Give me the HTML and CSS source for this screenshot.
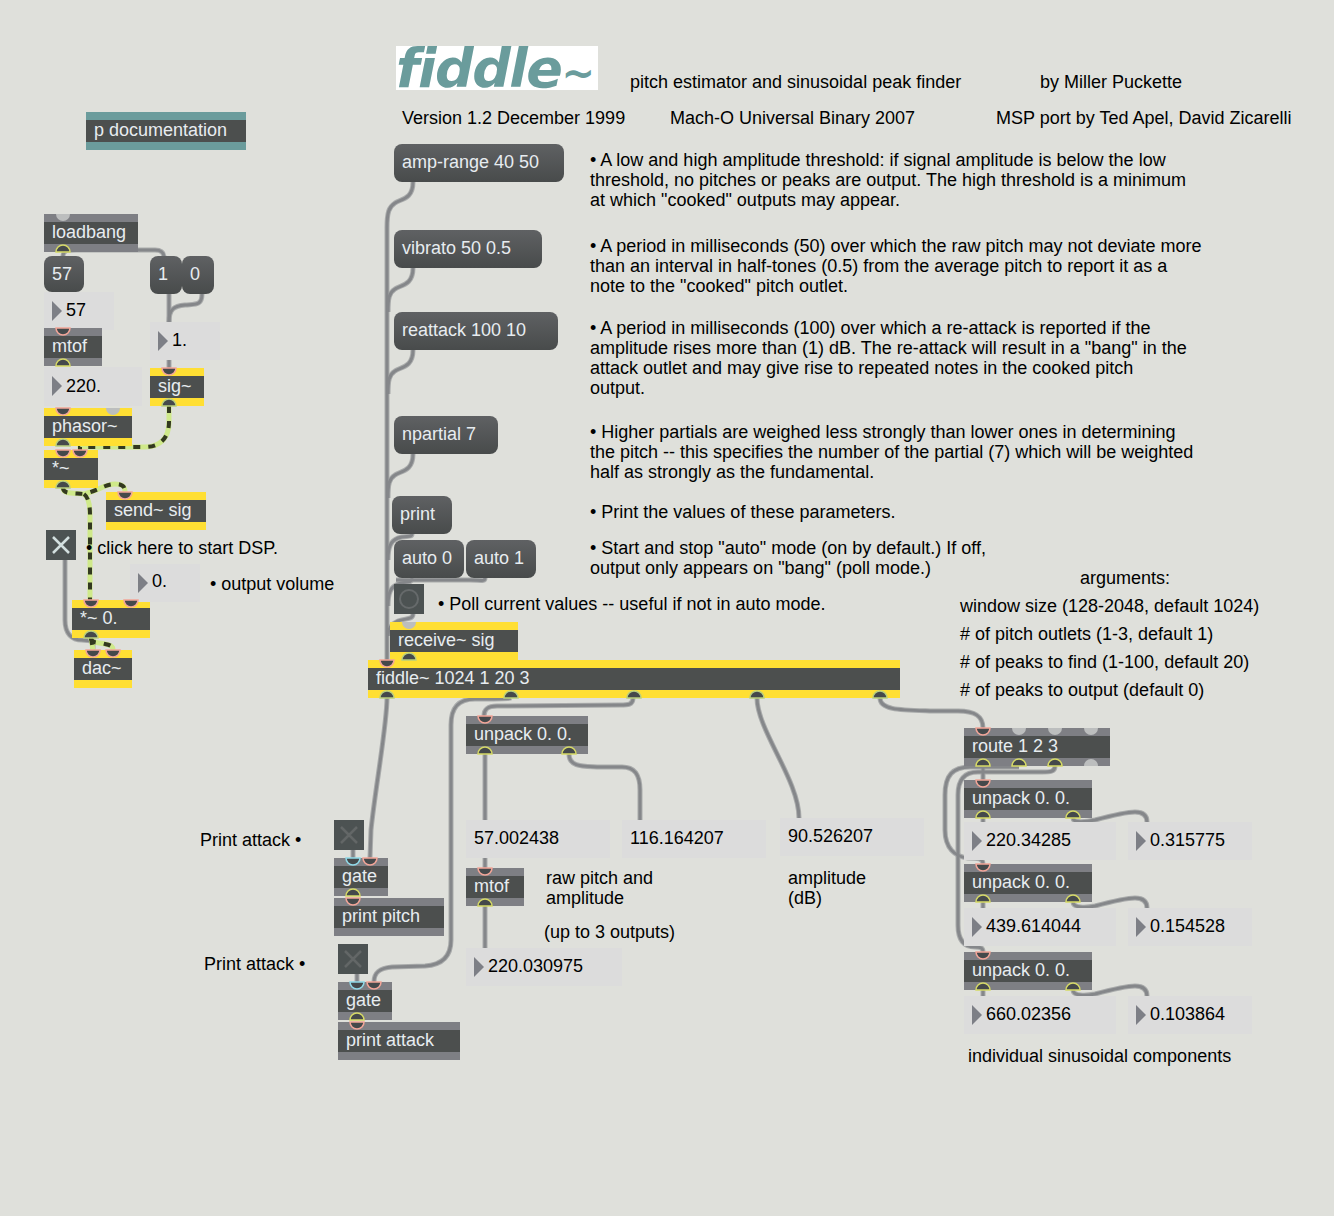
FILE: index.html

```html
<!DOCTYPE html>
<html lang="en">
<head>
  <meta charset="UTF-8">
  <title>fiddle~ help patcher</title>
  <link rel="stylesheet" href="styles.css">
</head>
<body>

<div class="patch">

  <!-- patch cords sit under the boxes -->
  <svg class="layer" width="1334" height="1216">
    <defs>
      <g id="cords">
        <path d="M63 256C63 250 68 250 76 250L155 250C161 250 164 252 164 258"/>
        <path d="M169 294L169 322"/>
        <path d="M202 294C202 306 195 304 185 305C174 306 169 309 169 322"/>
        <path d="M169 360L169 368"/>
        <path d="M65 560L65 620C65 634 72 640 82 640L93 641L93 650"/>
        <path d="M413 182C413 200 400 199 395 203C389 207 387 212 387 228L387 660"/>
        <path d="M413 268C413 286 400 285 395 289C389 293 388 298 388 312"/>
        <path d="M413 350C413 368 400 367 395 371C389 375 388 380 388 394"/>
        <path d="M413 454C413 472 400 471 395 475C389 479 388 484 388 498"/>
        <path d="M412 534C412 538 405 535 398 538C391 541 388 546 388 560"/>
        <path d="M412 578C412 584 405 581 398 584C391 587 388 592 388 606"/>
        <path d="M485 578C485 582 480 580 470 580L396 580"/>
        <path d="M413 614C413 620 405 618 398 621C391 624 388 628 388 636"/>
        <path d="M387 698C387 725 375 790 371 830L370 858"/>
        <path d="M511 698C508 699 490 699 475 699C458 699 451 708 451 725L451 940C451 958 440 965 425 966L392 967C380 968 374 972 374 982"/>
        <path d="M633 698C633 705 628 705 620 705L497 706C488 706 484 709 484 716"/>
        <path d="M757 698C757 730 799 780 799 818"/>
        <path d="M880 698C880 710 900 710 930 711L958 711C975 711 983 716 983 728"/>
        <path d="M485 754L485 820"/>
        <path d="M569 754C569 768 585 766 600 767L622 767C635 767 640 775 640 790L640 820"/>
        <path d="M485 858L485 868"/>
        <path d="M485 906L485 948"/>
        <path d="M353 850L353 858"/>
        <path d="M357 974L357 982"/>
        <path d="M983 766L983 780"/>
        <path d="M1019 767L970 767C953 767 945 775 945 795L945 830C945 848 955 857 968 858C978 858 983 858 983 864"/>
        <path d="M1055 766C1055 772 1050 772 1042 772L978 772C964 772 958 780 958 795L958 925C958 940 964 947 975 947C981 947 983 948 983 952"/>
        <path d="M983 818L983 822"/>
        <path d="M983 902L983 908"/>
        <path d="M983 990L983 996"/>
        <path d="M1073 818C1073 823 1085 822 1095 820C1110 816 1125 812 1135 812C1143 812 1147 815 1147 822"/>
        <path d="M1073 902C1073 908 1085 908 1095 906C1110 902 1125 898 1135 898C1143 898 1147 901 1147 908"/>
        <path d="M1073 990C1073 996 1085 996 1095 994C1110 990 1125 986 1135 986C1143 986 1147 989 1147 996"/>
      </g>
      <g id="signals">
        <path d="M169 406L169 422C169 438 160 447 145 447L80 447L80 450"/>
        <path d="M63 488C63 494 72 493 84 494C98 491 105 484 115 484C122 484 125 486 125 492"/>
        <path d="M84 494C88 497 90 504 90 515L90 600"/>
        <path d="M91 638L93 650"/>
        <path d="M91 638C91 644 100 642 105 644C110 645 113 646 113 650"/>
      </g>
      <path id="in" d="M-7 0a7 7 0 0 0 14 0z"/>
      <path id="out" d="M-7 0a7 7 0 0 1 14 0z"/>
    </defs>
    <use href="#cords" class="cord-edge"/>
    <use href="#cords" class="cord-core"/>
    <use href="#signals" class="signal-edge"/>
    <use href="#signals" class="signal-core"/>
  </svg>

  <div class="logo">fiddle<span class="logo-tilde">~</span></div>

  <!-- top notes -->
  <p class="note n-title">pitch estimator and sinusoidal peak finder</p>
  <p class="note n-author">by Miller Puckette</p>
  <p class="note n-version">Version 1.2 December 1999</p>
  <p class="note n-macho">Mach-O Universal Binary 2007</p>
  <p class="note n-port">MSP port by Ted Apel, David Zicarelli</p>

  <!-- left hand column -->
  <div class="obj doc o-doc">p documentation</div>
  <div class="obj o-loadbang">loadbang</div>
  <div class="msg o-m57">57</div>
  <div class="msg o-m1">1</div>
  <div class="msg o-m0">0</div>
  <div class="num o-n57">57</div>
  <div class="num o-n1">1.</div>
  <div class="obj o-mtof">mtof</div>
  <div class="num o-n220">220.</div>
  <div class="obj sig o-sig">sig~</div>
  <div class="obj sig o-phasor">phasor~</div>
  <div class="obj sig o-times">*~</div>
  <div class="obj sig o-send">send~ sig</div>
  <div class="toggle o-dsp"><svg width="30" height="30"><path d="M7 7L23 23M23 7L7 23"/></svg></div>
  <p class="note n-click">• click here to start DSP.</p>
  <div class="obj sig o-times0">*~ 0.</div>
  <div class="num num-up o-n0">0.</div>
  <p class="note n-volume">• output volume</p>
  <div class="obj sig o-dac">dac~</div>

  <!-- messages -->
  <div class="msg o-amp">amp-range 40 50</div>
  <div class="msg o-vibrato">vibrato 50 0.5</div>
  <div class="msg o-reattack">reattack 100 10</div>
  <div class="msg o-npartial">npartial 7</div>
  <div class="msg o-print">print</div>
  <div class="msg o-auto0">auto 0</div>
  <div class="msg o-auto1">auto 1</div>
  <div class="bang o-bang"></div>

  <p class="note n-amp">• A low and high amplitude threshold: if signal amplitude is below the low<br>threshold, no pitches or peaks are output. The high threshold is a minimum<br>at which "cooked" outputs may appear.</p>
  <p class="note n-vibrato">• A period in milliseconds (50) over which the raw pitch may not deviate more<br>than an interval in half-tones (0.5) from the average pitch to report it as a<br>note to the "cooked" pitch outlet.</p>
  <p class="note n-reattack">• A period in milliseconds (100) over which a re-attack is reported if the<br>amplitude rises more than (1) dB. The re-attack will result in a "bang" in the<br>attack outlet and may give rise to repeated notes in the cooked pitch<br>output.</p>
  <p class="note n-npartial">• Higher partials are weighed less strongly than lower ones in determining<br>the pitch -- this specifies the number of the partial (7) which will be weighted<br>half as strongly as the fundamental.</p>
  <p class="note n-print">• Print the values of these parameters.</p>
  <p class="note n-auto">• Start and stop "auto" mode (on by default.) If off,<br>output only appears on "bang" (poll mode.)</p>
  <p class="note n-poll">• Poll current values -- useful if not in auto mode.</p>

  <p class="note n-args">arguments:</p>
  <p class="note n-arg1"> window size (128-2048, default 1024)</p>
  <p class="note n-arg2"># of pitch outlets (1-3, default 1)</p>
  <p class="note n-arg3"># of peaks to find (1-100, default 20)</p>
  <p class="note n-arg4"># of peaks to output (default 0)</p>

  <div class="obj sig o-receive">receive~ sig</div>
  <div class="obj sig o-fiddle">fiddle~ 1024 1 20 3</div>

  <!-- print branch -->
  <p class="note n-attack1">Print attack •</p>
  <div class="toggle dim o-t1"><svg width="30" height="30"><path d="M7 7L23 23M23 7L7 23"/></svg></div>
  <div class="obj o-gate1">gate</div>
  <div class="obj o-pitch">print pitch</div>
  <p class="note n-attack2">Print attack •</p>
  <div class="toggle dim o-t2"><svg width="30" height="30"><path d="M7 7L23 23M23 7L7 23"/></svg></div>
  <div class="obj o-gate2">gate</div>
  <div class="obj o-attack">print attack</div>

  <!-- raw pitch and amplitude -->
  <div class="obj o-unpack">unpack 0. 0.</div>
  <div class="num bare o-raw">57.002438</div>
  <div class="num bare o-rawamp">116.164207</div>
  <div class="num bare o-dbamp">90.526207</div>
  <div class="obj o-mtof2">mtof</div>
  <div class="num o-freq">220.030975</div>
  <p class="note n-raw">raw pitch and<br>amplitude</p>
  <p class="note n-upto">(up to 3 outputs)</p>
  <p class="note n-db">amplitude<br>(dB)</p>

  <!-- sinusoidal components -->
  <div class="obj o-route">route 1 2 3</div>
  <div class="obj o-up1">unpack 0. 0.</div>
  <div class="num o-f1">220.34285</div>
  <div class="num o-a1">0.315775</div>
  <div class="obj o-up2">unpack 0. 0.</div>
  <div class="num o-f2">439.614044</div>
  <div class="num o-a2">0.154528</div>
  <div class="obj o-up3">unpack 0. 0.</div>
  <div class="num o-f3">660.02356</div>
  <div class="num o-a3">0.103864</div>
  <p class="note n-indiv">individual sinusoidal components</p>

  <!-- inlets and outlets sit on top of everything -->
  <svg class="layer" width="1334" height="1216">
    <g class="port-in">
      <use href="#in" x="63" y="328"/><use href="#in" x="169" y="368"/><use href="#in" x="63" y="408"/>
      <use href="#in" x="63" y="450"/><use href="#in" x="80" y="450"/><use href="#in" x="125" y="492"/>
      <use href="#in" x="91" y="600"/><use href="#in" x="131" y="600"/><use href="#in" x="93" y="650"/>
      <use href="#in" x="113" y="650"/><use href="#in" x="387" y="660"/><use href="#in" x="485" y="716"/>
      <use href="#in" x="983" y="728"/><use href="#in" x="983" y="780"/><use href="#in" x="983" y="864"/>
      <use href="#in" x="983" y="952"/><use href="#in" x="370" y="858"/><use href="#in" x="374" y="982"/>
      <use href="#in" x="353" y="898"/><use href="#in" x="357" y="1022"/><use href="#in" x="485" y="868"/>
    </g>
    <g class="port-cold">
      <use href="#in" x="353" y="858"/><use href="#in" x="357" y="982"/>
    </g>
    <g class="port-idle">
      <use href="#in" x="63" y="214"/><use href="#in" x="113" y="408"/><use href="#in" x="409" y="622"/>
      <use href="#in" x="1019" y="728"/><use href="#in" x="1055" y="728"/><use href="#in" x="1091" y="728"/>
      <use href="#out" x="1091" y="766"/>
    </g>
    <g class="port-out">
      <use href="#out" x="63" y="252"/><use href="#out" x="63" y="366"/><use href="#out" x="485" y="906"/>
      <use href="#out" x="353" y="896"/><use href="#out" x="357" y="1020"/>
      <use href="#out" x="983" y="766"/><use href="#out" x="1019" y="766"/><use href="#out" x="1055" y="766"/>
      <use href="#out" x="983" y="818"/><use href="#out" x="1073" y="818"/><use href="#out" x="983" y="902"/>
      <use href="#out" x="1073" y="902"/><use href="#out" x="983" y="990"/><use href="#out" x="1073" y="990"/>
      <use href="#out" x="485" y="754"/><use href="#out" x="569" y="754"/>
    </g>
    <g class="port-sig">
      <use href="#out" x="169" y="406"/><use href="#out" x="63" y="446"/><use href="#out" x="63" y="488"/>
      <use href="#out" x="91" y="638"/><use href="#out" x="409" y="660"/><use href="#out" x="387" y="698"/>
      <use href="#out" x="511" y="698"/><use href="#out" x="634" y="698"/><use href="#out" x="757" y="698"/>
      <use href="#out" x="880" y="698"/>
    </g>
  </svg>

</div>

</body>
</html>
```

FILE: styles.css

```css
body {
  margin: 0;
  background-color: #dfe0db;
  font-family: "Liberation Sans", Arial, sans-serif;
  font-size: 18px;
}
.patch {
  position: relative;
  width: 1334px;
  height: 1216px;
  overflow: hidden;
}
.layer {
  position: absolute;
  left: 0;
  top: 0;
  pointer-events: none;
}

/* cords */
.cord-edge, .cord-core, .signal-edge, .signal-core {
  fill: none;
}
.cord-edge {
  stroke: #a9abab;
  stroke-width: 5;
}
.cord-core {
  stroke: #85878a;
  stroke-width: 3;
}
.signal-edge {
  stroke: #cfe98a;
  stroke-width: 5;
}
.signal-core {
  stroke: #33391f;
  stroke-width: 4;
  stroke-dasharray: 7 8;
}

/* ports */
.port-in, .port-cold, .port-out, .port-sig {
  fill: #45494b;
  stroke-width: 1.5;
}
.port-in { stroke: #f2a598; }
.port-cold { stroke: #8fd9e8; }
.port-out { stroke: #d6da66; }
.port-sig { stroke: #b9cf7e; }
.port-idle { fill: #bcbebe; }

/* boxes */
.obj, .msg, .num, .toggle, .bang {
  position: absolute;
  box-sizing: border-box;
  height: 38px;
}
.obj, .msg, .num {
  line-height: 36px;
  padding-left: 8px;
  white-space: nowrap;
}
.obj, .msg {
  color: #e7ecf0;
}
.obj {
  background-color: #4c4f4e;
  border-top: 8px solid #7e7f84;
  border-bottom: 8px solid #7e7f84;
  line-height: 20px;
}
.sig {
  border-color: #ffdf33;
}
.doc {
  border-color: #6b9c9c;
}
.msg {
  border-radius: 8px;
  background: linear-gradient(#5f6163, #484b4b);
}
.num {
  background-color: #dcdcdc;
  color: #000;
  padding-left: 22px;
}
.num::before {
  content: "";
  position: absolute;
  left: 8px;
  top: 9px;
  border-left: 10px solid #7d7f86;
  border-top: 10px solid transparent;
  border-bottom: 10px solid transparent;
}
.bare {
  padding-left: 8px;
}
.bare::before {
  display: none;
}
.num-up {
  line-height: 34px;
}
.toggle, .bang {
  width: 30px;
  height: 30px;
  background-color: #4c5252;
}
.toggle svg {
  display: block;
}
.toggle path {
  stroke: #d3dfdf;
  stroke-width: 2.5;
  fill: none;
}
.dim path {
  stroke: #636767;
}
.bang::after {
  content: "";
  position: absolute;
  left: 5px;
  top: 5px;
  width: 20px;
  height: 20px;
  box-sizing: border-box;
  border: 2px solid #666a6b;
  border-radius: 50%;
}

.logo {
  position: absolute;
  left: 396px;
  top: 46px;
  width: 202px;
  height: 44px;
  background-color: #fff;
  color: #6a9c9c;
  font-family: "DejaVu Sans", sans-serif;
  font-size: 54px;
  font-weight: bold;
  font-style: italic;
  font-variant-ligatures: none;
  letter-spacing: -1.5px;
  line-height: 46px;
  white-space: nowrap;
}
.logo-tilde {
  font-size: 40px;
  letter-spacing: 0;
}

/* comments */
.note {
  position: absolute;
  margin: 0;
  color: #000;
  line-height: 20px;
  white-space: nowrap;
}

/* object places on the canvas */
.o-doc { left: 86px; top: 112px; width: 160px; }
.o-loadbang { left: 44px; top: 214px; width: 94px; }
.o-m57 { left: 44px; top: 256px; width: 40px; height: 36px; }
.o-m1 { left: 150px; top: 256px; width: 32px; }
.o-m0 { left: 182px; top: 256px; width: 32px; }
.o-n57 { left: 44px; top: 292px; width: 70px; }
.o-n1 { left: 150px; top: 322px; width: 70px; }
.o-mtof { left: 44px; top: 328px; width: 58px; }
.o-n220 { left: 44px; top: 367px; width: 98px; height: 39px; line-height: 38px; }
.o-sig { left: 150px; top: 368px; width: 54px; }
.o-phasor { left: 44px; top: 408px; width: 88px; }
.o-times { left: 44px; top: 450px; width: 54px; }
.o-send { left: 106px; top: 492px; width: 100px; }
.o-dsp { left: 46px; top: 530px; }
.o-times0 { left: 72px; top: 600px; width: 78px; }
.o-n0 { left: 130px; top: 564px; width: 70px; }
.o-dac { left: 74px; top: 650px; width: 58px; }

.o-amp { left: 394px; top: 144px; width: 170px; }
.o-vibrato { left: 394px; top: 230px; width: 148px; }
.o-reattack { left: 394px; top: 312px; width: 164px; }
.o-npartial { left: 394px; top: 416px; width: 104px; }
.o-print { left: 392px; top: 496px; width: 60px; }
.o-auto0 { left: 394px; top: 540px; width: 70px; }
.o-auto1 { left: 466px; top: 540px; width: 70px; }
.o-bang { left: 394px; top: 584px; }
.o-receive { left: 390px; top: 622px; width: 128px; }
.o-fiddle { left: 368px; top: 660px; width: 532px; }

.o-t1 { left: 334px; top: 820px; }
.o-gate1 { left: 334px; top: 858px; width: 54px; }
.o-pitch { left: 334px; top: 898px; width: 110px; }
.o-t2 { left: 338px; top: 944px; }
.o-gate2 { left: 338px; top: 982px; width: 54px; }
.o-attack { left: 338px; top: 1022px; width: 122px; }

.o-unpack { left: 466px; top: 716px; width: 122px; }
.o-raw { left: 466px; top: 820px; width: 144px; }
.o-rawamp { left: 622px; top: 820px; width: 144px; }
.o-dbamp { left: 780px; top: 818px; width: 144px; }
.o-mtof2 { left: 466px; top: 868px; width: 58px; }
.o-freq { left: 466px; top: 948px; width: 156px; }

.o-route { left: 964px; top: 728px; width: 146px; }
.o-up1 { left: 964px; top: 780px; width: 128px; }
.o-f1 { left: 964px; top: 822px; width: 152px; }
.o-a1 { left: 1128px; top: 822px; width: 124px; }
.o-up2 { left: 964px; top: 864px; width: 128px; }
.o-f2 { left: 964px; top: 908px; width: 152px; }
.o-a2 { left: 1128px; top: 908px; width: 124px; }
.o-up3 { left: 964px; top: 952px; width: 128px; }
.o-f3 { left: 964px; top: 996px; width: 152px; }
.o-a3 { left: 1128px; top: 996px; width: 124px; }

/* comment places */
.n-title { left: 630px; top: 72px; }
.n-author { left: 1040px; top: 72px; }
.n-version { left: 402px; top: 108px; }
.n-macho { left: 670px; top: 108px; }
.n-port { left: 996px; top: 108px; }
.n-click { left: 86px; top: 538px; }
.n-volume { left: 210px; top: 574px; }
.n-amp { left: 590px; top: 150px; }
.n-vibrato { left: 590px; top: 236px; }
.n-reattack { left: 590px; top: 318px; }
.n-npartial { left: 590px; top: 422px; }
.n-print { left: 590px; top: 502px; }
.n-auto { left: 590px; top: 538px; }
.n-poll { left: 438px; top: 594px; }
.n-args { left: 1080px; top: 568px; }
.n-arg1 { left: 960px; top: 596px; }
.n-arg2 { left: 960px; top: 624px; }
.n-arg3 { left: 960px; top: 652px; }
.n-arg4 { left: 960px; top: 680px; }
.n-attack1 { left: 200px; top: 830px; }
.n-attack2 { left: 204px; top: 954px; }
.n-raw { left: 546px; top: 868px; }
.n-upto { left: 544px; top: 922px; }
.n-db { left: 788px; top: 868px; }
.n-indiv { left: 968px; top: 1046px; }
```
